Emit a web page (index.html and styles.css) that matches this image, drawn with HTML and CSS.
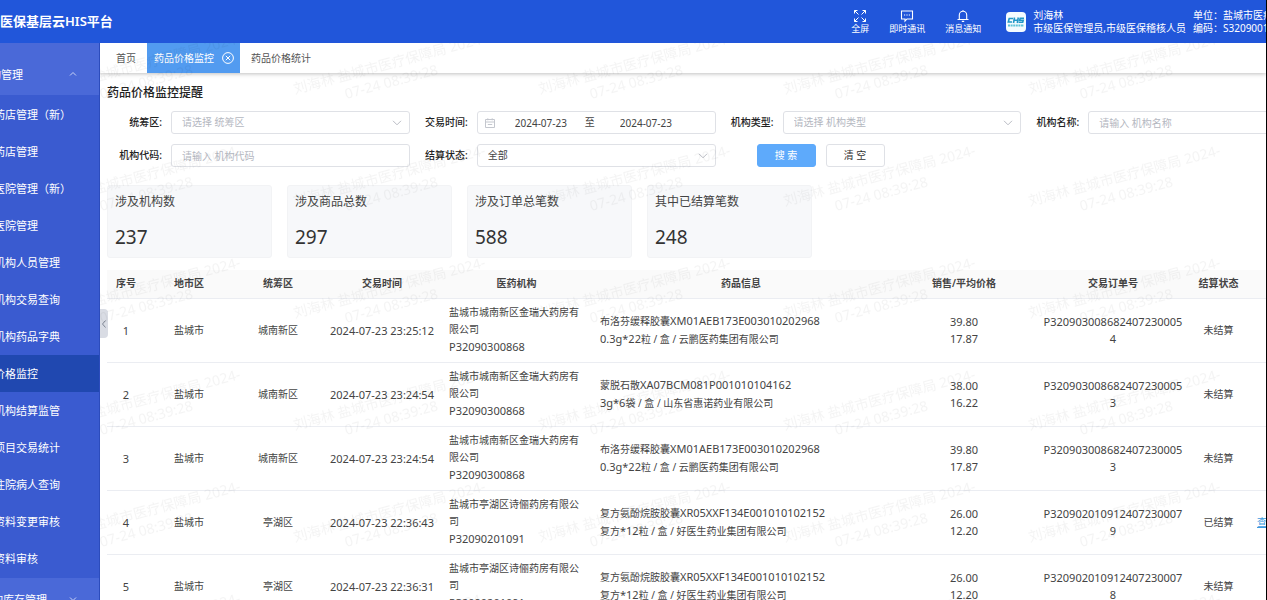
FILE: index.html
```html
<!DOCTYPE html>
<html lang="zh-CN">
<head>
<meta charset="utf-8">
<title>医保基层云HIS平台</title>
<link rel="stylesheet" href="styles.css">
</head>
<body>
<div class="app">
  <header class="topbar">
    <div class="brand">医保基层云HIS平台</div>
    <nav class="tools" aria-label="工具">
      <button type="button" class="tool">
        <svg class="tool-icon" viewBox="0 0 14 14" fill="none" stroke="currentColor" stroke-width="1"><path d="M1.500 4.500v-3h3M1.500 1.500l4 4M9.500 1.500h3v3M12.500 1.500l-4 4M1.500 9.500v3h3M1.500 12.500l4-4M12.500 9.500v3h-3M12.500 12.500l-4-4"/></svg>
        <span>全屏</span>
      </button>
      <button type="button" class="tool">
        <svg class="tool-icon" viewBox="0 0 14 14" fill="none" stroke="currentColor" stroke-width="1.1"><path d="M1.500 2h11v8H7l-2 2.200V10H1.500z"/><path d="M4 6h1.200M6.400 6h1.200M8.800 6H10"/></svg>
        <span>即时通讯</span>
      </button>
      <button type="button" class="tool">
        <svg class="tool-icon" viewBox="0 0 14 14" fill="none" stroke="currentColor" stroke-width="1.1"><path d="M1.500 10.500h11M3.300 10.500V6a3.700 3.700 0 0 1 7.400 0v4.500M7 2.300V1M5.800 12.400h2.400"/></svg>
        <span>消息通知</span>
      </button>
    </nav>
    <div class="user">
      <svg class="avatar" viewBox="0 0 20 20"><rect width="20" height="20" rx="4" fill="#f4fbff"/><g fill="none" stroke="#2398c8" stroke-width="1.600"><path d="M7 6.500H3.200L2.300 10H6M8.500 5.500L7.500 11M12.300 5.500L11.300 11M8 8.200h4M18 6.300h-3.800l-.5 1.900h3.500l-.5 2h-4"/></g><path d="M2 13.500h16" stroke="#5fc3d8" stroke-width="1.800" stroke-dasharray="2 .6"/></svg>
      <div class="lines"><div>刘海林</div><div>市级医保管理员,市级医保稽核人员</div></div>
    </div>
    <div class="lines org"><div>单位：盐城市医疗</div><div>编码：S3209001</div></div>
  </header>

  <div class="body">
    <aside class="sidebar">
      <button type="button" class="group"><span>构管理</span><svg class="caret" viewBox="0 0 8 8"><path d="M1 5.500l3-3 3 3"/></svg></button>
      <ul class="menu">
        <li><a href="#">药店管理（新）</a></li>
        <li><a href="#">药店管理</a></li>
        <li><a href="#">医院管理（新）</a></li>
        <li><a href="#">医院管理</a></li>
        <li><a href="#">机构人员管理</a></li>
        <li><a href="#">机构交易查询</a></li>
        <li><a href="#">机构药品字典</a></li>
        <li><a href="#" class="current" aria-current="page">价格监控</a></li>
        <li><a href="#">机构结算监管</a></li>
        <li><a href="#">项目交易统计</a></li>
        <li><a href="#">住院病人查询</a></li>
        <li><a href="#">资料变更审核</a></li>
        <li><a href="#">资料审核</a></li>
      </ul>
      <button type="button" class="group group-last"><span>构库存管理</span><svg class="caret" viewBox="0 0 8 8"><path d="M1 2.500l3 3 3-3"/></svg></button>
    </aside>

    <main class="main">
      <nav class="tabs" aria-label="标签页">
        <a href="#" class="tab">首页</a>
        <a href="#" class="tab active">药品价格监控<svg class="close" viewBox="0 0 12 12" fill="none" stroke="currentColor"><circle cx="6" cy="6" r="5.400"/><path d="M3.800 3.800l4.400 4.400M8.200 3.800L3.800 8.200"/></svg></a>
        <a href="#" class="tab">药品价格统计</a>
      </nav>

      <div class="content">
        <h1>药品价格监控提醒</h1>

        <form class="filters">
          <div class="item">
            <label for="area">统筹区:</label>
            <div class="field"><select id="area" class="empty"><option>请选择 统筹区</option></select><svg class="arrow" viewBox="0 0 10 6"><path d="M1 .8l4 4 4-4"/></svg></div>
          </div>
          <div class="item">
            <label for="from">交易时间:</label>
            <div class="field range">
              <svg class="calendar" viewBox="0 0 10 10"><path d="M.5 1.500h9v8h-9zM.5 4h9M2.800.3v2M7.200.3v2M2.800 6.500h4.400"/></svg>
              <input id="from" type="text" value="2024-07-23"><span>至</span><input type="text" value="2024-07-23" aria-label="结束日期">
            </div>
          </div>
          <div class="item">
            <label for="type">机构类型:</label>
            <div class="field"><select id="type" class="empty"><option>请选择 机构类型</option></select><svg class="arrow" viewBox="0 0 10 6"><path d="M1 .8l4 4 4-4"/></svg></div>
          </div>
          <div class="item">
            <label for="name">机构名称:</label>
            <div class="field"><input id="name" type="text" placeholder="请输入 机构名称"></div>
          </div>
          <div class="item">
            <label for="code">机构代码:</label>
            <div class="field"><input id="code" type="text" placeholder="请输入 机构代码"></div>
          </div>
          <div class="item">
            <label for="state">结算状态:</label>
            <div class="field"><select id="state"><option>全部</option></select><svg class="arrow" viewBox="0 0 10 6"><path d="M1 .8l4 4 4-4"/></svg></div>
          </div>
          <div class="actions">
            <button type="button" class="btn primary">搜 索</button>
            <button type="button" class="btn">清 空</button>
          </div>
        </form>

        <section class="cards">
          <div class="card"><div>涉及机构数</div><strong>237</strong></div>
          <div class="card"><div>涉及商品总数</div><strong>297</strong></div>
          <div class="card"><div>涉及订单总笔数</div><strong>588</strong></div>
          <div class="card"><div>其中已结算笔数</div><strong>248</strong></div>
        </section>

        <table class="grid">
          <colgroup><col class="c-no"><col class="c-city"><col class="c-area"><col class="c-time"><col class="c-org"><col class="c-drug"><col class="c-price"><col class="c-order"><col class="c-state"><col class="c-action"></colgroup>
          <thead>
            <tr><th>序号</th><th>地市区</th><th>统筹区</th><th>交易时间</th><th>医药机构</th><th>药品信息</th><th>销售/平均价格</th><th>交易订单号</th><th>结算状态</th><td></td></tr>
          </thead>
          <tbody>
            <tr><td class="num">1</td><td>盐城市</td><td>城南新区</td><td class="num">2024-07-23 23:25:12</td><td class="left">盐城市城南新区金瑞大药房有限公司<br><span class="num">P32090300868</span></td><td class="left">布洛芬缓释胶囊<span class="num">XM01AEB173E003010202968</span><br><span class="num">0.3g*22</span>粒 / 盒 / 云鹏医药集团有限公司</td><td class="num">39.80<br>17.87</td><td class="num">P3209030086824072300054</td><td>未结算</td><td></td></tr>
            <tr><td class="num">2</td><td>盐城市</td><td>城南新区</td><td class="num">2024-07-23 23:24:54</td><td class="left">盐城市城南新区金瑞大药房有限公司<br><span class="num">P32090300868</span></td><td class="left">蒙脱石散<span class="num">XA07BCM081P001010104162</span><br><span class="num">3g*6</span>袋 / 盒 / 山东省惠诺药业有限公司</td><td class="num">38.00<br>16.22</td><td class="num">P3209030086824072300053</td><td>未结算</td><td></td></tr>
            <tr><td class="num">3</td><td>盐城市</td><td>城南新区</td><td class="num">2024-07-23 23:24:54</td><td class="left">盐城市城南新区金瑞大药房有限公司<br><span class="num">P32090300868</span></td><td class="left">布洛芬缓释胶囊<span class="num">XM01AEB173E003010202968</span><br><span class="num">0.3g*22</span>粒 / 盒 / 云鹏医药集团有限公司</td><td class="num">39.80<br>17.87</td><td class="num">P3209030086824072300053</td><td>未结算</td><td></td></tr>
            <tr><td class="num">4</td><td>盐城市</td><td>亭湖区</td><td class="num">2024-07-23 22:36:43</td><td class="left">盐城市亭湖区诗俪药房有限公司<br><span class="num">P32090201091</span></td><td class="left">复方氨酚烷胺胶囊<span class="num">XR05XXF134E001010102152</span><br>复方<span class="num">*12</span>粒 / 盒 / 好医生药业集团有限公司</td><td class="num">26.00<br>12.20</td><td class="num">P3209020109124072300079</td><td>已结算</td><td class="left"><a href="#">查看</a></td></tr>
            <tr><td class="num">5</td><td>盐城市</td><td>亭湖区</td><td class="num">2024-07-23 22:36:31</td><td class="left">盐城市亭湖区诗俪药房有限公司<br><span class="num">P32090201091</span></td><td class="left">复方氨酚烷胺胶囊<span class="num">XR05XXF134E001010102152</span><br>复方<span class="num">*12</span>粒 / 盒 / 好医生药业集团有限公司</td><td class="num">26.00<br>12.20</td><td class="num">P3209020109124072300078</td><td>未结算</td><td></td></tr>
          </tbody>
        </table>
      </div>

      <button type="button" class="collapse" aria-label="收起菜单"><svg viewBox="0 0 6 10"><path d="M4.500 1.500L1.500 5l3 3.500"/></svg></button>
      <svg class="watermark" aria-hidden="true">
        <defs>
          <pattern id="stamp" x="191" y="68" width="245" height="112" patternUnits="userSpaceOnUse">
            <g transform="translate(4 95) rotate(-15)"><text x="0" y="0">刘海林 盐城市医疗保障局 2024-</text><text x="96" y="18" text-anchor="middle">07-24 08:39:28</text></g>
          </pattern>
        </defs>
        <rect width="100%" height="100%" fill="url(#stamp)"/>
      </svg>
    </main>
  </div>
</div>
</body>
</html>
```
FILE: styles.css
```css
* { box-sizing: border-box; }

body {
  margin: 0;
  overflow: hidden;
  font: 10px/17px "Noto Sans", "Noto Sans CJK SC", sans-serif;
  color: #444;
  background: #fff;
}

button, input, select { font: inherit; color: inherit; margin: 0; }
button { border: 0; padding: 0; background: none; cursor: pointer; }
a { color: inherit; text-decoration: none; }

.app {
  display: flex;
  flex-direction: column;
  height: 100vh;
  overflow: hidden;
  border-right: 1px solid #000;
}

/* Top bar */
.topbar {
  display: flex;
  align-items: center;
  flex: none;
  height: 43px;
  color: #fff;
  background: #2156da;
  overflow: hidden;
}
.brand { flex: 1; font-size: 13px; font-weight: 600; white-space: nowrap; }
.tools { display: flex; gap: 20px; margin-right: 25px; }
.tool {
  display: flex;
  flex-direction: column;
  align-items: center;
  font-size: 9px;
  line-height: 12px;
}
.tool-icon { width: 14px; height: 14px; }
.user { display: flex; align-items: center; gap: 7px; margin-right: 7px; }
.avatar { width: 20px; height: 20px; }
.lines { font-size: 10px; line-height: 13px; white-space: nowrap; }
.org { width: 73px; }

.body { display: flex; flex: 1; min-height: 0; }

/* Sidebar */
.sidebar {
  flex: none;
  width: 100px;
  overflow: hidden;
  color: #fff;
  background: #3a5bd0;
  border-right: 1px solid #2c4cbc;
  font-size: 11px;
}
.group {
  display: flex;
  align-items: center;
  justify-content: space-between;
  width: 100%;
  height: 52px;
  padding: 10px 22px 0 0;
  background: #4a69d8;
}
.group span { margin-left: -10px; white-space: nowrap; }
.group-last { height: 42px; padding-top: 0; }
.group-last span { margin-left: -8px; }
.caret { width: 8px; height: 8px; fill: none; stroke: #c9d3f5; }
.menu { margin: 0; padding: 1px 0; list-style: none; }
.menu a { display: block; line-height: 37px; text-indent: -6px; white-space: nowrap; }
.menu .current { background: #2048b0; }

/* Main area */
.main { position: relative; flex: 1; min-width: 0; overflow: hidden; }
.tabs {
  display: flex;
  height: 30px;
  padding-left: 5px;
  line-height: 30px;
  color: #555;
  box-shadow: 0 1px 4px rgba(0, 0, 0, .25);
}
.tab { display: flex; align-items: center; gap: 8px; padding: 0 11px; }
.tab.active { padding: 0 6px 0 7px; color: #fff; background: #529bf0; }
.close { width: 12px; height: 12px; }

.content { padding: 11px 0 0 7px; min-width: 1227px; }
h1 { margin: 0 0 9px; font-size: 12px; line-height: 18px; font-weight: 500; color: #222; }

/* Filters */
.filters {
  display: grid;
  grid-template-columns: repeat(4, 1fr);
  gap: 10px 0;
  margin-left: -3px;
}
.item { display: flex; align-items: center; gap: 9px; }
.item label { width: 58px; text-align: right; font-weight: 500; color: #222; }
.field {
  position: relative;
  display: flex;
  align-items: center;
  flex: 1;
  height: 23px;
  border: 1px solid #dfe1e6;
  border-radius: 3px;
  background: #fff;
}
.field input, .field select {
  width: 100%;
  height: 100%;
  padding: 0 10px;
  border: 0;
  outline: 0;
  background: none;
  appearance: none;
}
.field .empty, .field input::placeholder { color: #b4b7bf; opacity: 1; }
.arrow { position: absolute; right: 7px; width: 10px; height: 6px; fill: none; stroke: #b9bcc4; pointer-events: none; }
.range { padding-left: 7px; }
.range input { width: 75px; padding: 0 0 0 20px; }
.range span { width: 40px; text-align: center; }
.range span + input { padding-left: 10px; }
.calendar { flex: none; width: 10px; height: 10px; fill: none; stroke: #c4c7ce; }

.actions { display: flex; gap: 10px; padding-left: 41px; }
.btn { width: 59px; height: 23px; border: 1px solid #dfe1e6; border-radius: 3px; background: #fff; color: #333; }
.btn.primary { color: #fff; background: #5eaafb; border-color: #5eaafb; }

/* Summary cards */
.cards { display: flex; gap: 15px; margin: 18px 0 12px; }
.card {
  width: 165px;
  height: 73px;
  padding: 7px;
  border: 1px solid #f2f3f5;
  border-radius: 3px;
  background: #f7f8fa;
  font-size: 12px;
  line-height: 18px;
}
.card strong { display: block; margin-top: 12px; font-size: 19px; line-height: 28px; font-weight: 400; color: #333; }

/* Records */
.grid { width: 100%; table-layout: fixed; border-collapse: collapse; text-align: center; }
.grid tr { height: 64px; border-bottom: 1px solid #ebedf2; }
.grid thead tr { height: 28px; background: #fafafa; }
.grid th { padding: 0; font-weight: 600; color: #444; }
.grid td { padding: 0 7px; word-break: break-all; }
.grid .left { text-align: left; padding: 0 8px; }
.grid .num { font-size: 11px; }
.grid td.num { padding: 0 4px; }
.grid a { color: #3c9be0; text-decoration: underline; }
.c-no { width: 38px; }
.c-city { width: 88px; }
.c-area { width: 90px; }
.c-time { width: 118px; }
.c-org { width: 151px; }
.c-price { width: 148px; }
.c-order { width: 150px; }
.c-state { width: 61px; }
.c-action { width: 78px; }

/* Overlays */
.collapse {
  position: absolute;
  top: 266px;
  left: 0;
  display: flex;
  align-items: center;
  justify-content: center;
  width: 8px;
  height: 29px;
  border-radius: 0 4px 4px 0;
  background: #d9dce4;
}
.collapse svg { width: 6px; height: 10px; fill: none; stroke: #7f8694; }
.watermark {
  position: absolute;
  inset: 0;
  width: 100%;
  height: 100%;
  font-size: 14px;
  fill: #000;
  opacity: .04;
  pointer-events: none;
}
```
